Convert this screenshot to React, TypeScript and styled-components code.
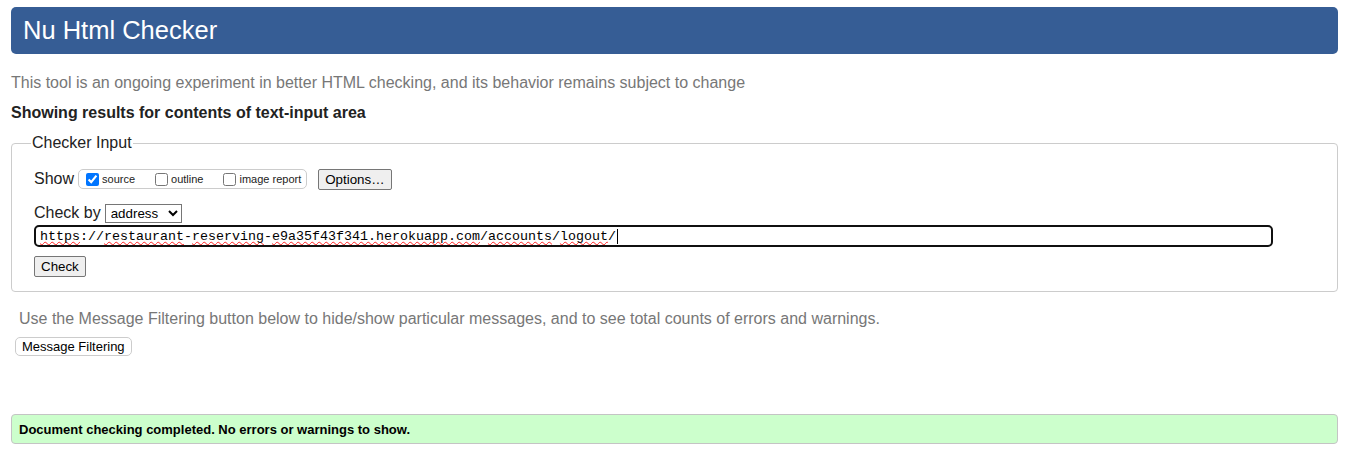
import React from "react";
import styled, { createGlobalStyle } from "styled-components";

const Global = createGlobalStyle`
  html, body { margin: 0; padding: 0; background: #fff; }
  body { font-family: "Liberation Sans", Arial, sans-serif; color: #222; }
`;

const Page = styled.div`
  padding: 7px 12px 0 11px;
  display: flex;
  flex-direction: column;
`;

const Header = styled.header`
  background: #365d95;
  border-radius: 5px;
  height: 47px;
  display: flex;
  align-items: center;
  padding: 0 12px;
`;

const Title = styled.h1`
  margin: 0;
  font-size: 25.5px;
  font-weight: normal;
  color: #fff;
`;

const Intro = styled.p`
  margin: 19px 0 0;
  font-size: 16px;
  line-height: 20px;
  color: #777;
`;

const Showing = styled.p`
  margin: 10px 0 0;
  font-size: 16px;
  line-height: 20px;
  font-weight: bold;
  color: #222;
`;

const Fieldset = styled.fieldset`
  margin: 11px 0 0;
  border: 1px solid #ccc;
  border-radius: 4px;
  padding: 16px 22px 14px 22px;
  display: flex;
  flex-direction: column;
`;

const Legend = styled.legend`
  font-size: 16px;
  padding: 0 1px;
  margin-left: -3px;
  color: #222;
`;

const Row = styled.div<{ $top?: number }>`
  display: flex;
  align-items: center;
  height: 22px;
  margin-top: ${(p) => p.$top ?? 0}px;
`;

const Label = styled.span`
  font-size: 16px;
  color: #222;
  margin-right: 4px;
`;

const OptionsBox = styled.span`
  display: inline-flex;
  align-items: center;
  height: 18px;
  border: 1px solid #ccc;
  border-radius: 5px;
  padding: 0 5px 0 6px;
`;

const Opt = styled.label<{ $gap?: number }>`
  display: inline-flex;
  align-items: center;
  font-size: 11px;
  color: #222;
  margin-right: ${(p) => p.$gap ?? 0}px;
  input { margin: 0 3px 0 1px; width: 13px; height: 13px; }
`;

const NativeButton = styled.button<{ $left?: number }>`
  font-family: "Liberation Sans", Arial, sans-serif;
  font-size: 13.33px;
  color: #000;
  background: #efefef;
  border: 1px solid #767676;
  border-radius: 2px;
  padding: 0 6px;
  height: 21px;
  margin-left: ${(p) => p.$left ?? 0}px;
`;

const Select = styled.select`
  font-family: "Liberation Sans", Arial, sans-serif;
  font-size: 13.33px;
  height: 19px;
  width: 77px;
  border: 1px solid #767676;
  border-radius: 0;
  background: #fff;
  color: #000;
  padding: 0 0 0 1px;
`;

const UrlField = styled.div`
  margin-top: 1px;
  height: 18px;
  border: 2px solid #101010;
  border-radius: 5px;
  padding: 0 4px;
  margin-right: 42px;
  display: flex;
  align-items: center;
  font-family: "Liberation Mono", "Courier New", monospace;
  font-size: 13.33px;
  color: #000;
  white-space: pre;
  overflow: hidden;
`;

const Miss = styled.span`
  text-decoration: underline wavy #f22;
  text-decoration-thickness: 1px;
  text-underline-offset: 1px;
  text-decoration-skip-ink: none;
`;

const Caret = styled.span`
  display: inline-block;
  width: 1px;
  height: 15px;
  background: #000;
  margin-left: 1px;
`;

const CheckRow = styled.div`
  margin-top: 9px;
  display: flex;
`;

const Note = styled.p`
  margin: 17px 0 0 8px;
  font-size: 16px;
  line-height: 20px;
  color: #777;
`;

const FilterRow = styled.div`
  margin: 8px 0 0 4px;
  display: flex;
`;

const FilterButton = styled.button`
  font-family: "Liberation Sans", Arial, sans-serif;
  font-size: 13px;
  color: #000;
  background: #fff;
  border: 1px solid #ccc;
  border-radius: 5px;
  height: 19px;
  padding: 0 6px;
`;

const Success = styled.div`
  margin-top: 58px;
  background: #ccffcc;
  border: 1px solid #c4c4c4;
  border-radius: 4px;
  height: 28px;
  display: flex;
  align-items: center;
  padding: 0 7px;
  font-size: 13px;
  font-weight: bold;
  color: #000;
`;

export default function App() {
  return (
    <>
      <Global />
      <Page>
        <Header>
          <Title>Nu Html Checker</Title>
        </Header>
        <Intro>
          This tool is an ongoing experiment in better HTML checking, and its behavior remains subject to change
        </Intro>
        <Showing>Showing results for contents of text-input area</Showing>
        <Fieldset>
          <Legend>Checker Input</Legend>
          <Row>
            <Label>Show</Label>
            <OptionsBox>
              <Opt $gap={19}>
                <input type="checkbox" defaultChecked />
                source
              </Opt>
              <Opt $gap={19}>
                <input type="checkbox" />
                outline
              </Opt>
              <Opt>
                <input type="checkbox" />
                image report
              </Opt>
            </OptionsBox>
            <NativeButton $left={11}>Options…</NativeButton>
          </Row>
          <Row $top={12}>
            <Label>Check by</Label>
            <Select defaultValue="address">
              <option value="address">address</option>
              <option value="file">file upload</option>
              <option value="text">text input</option>
            </Select>
          </Row>
          <UrlField role="textbox" aria-label="Address">
            <Miss>https</Miss>://<Miss>restaurant</Miss>-<Miss>reserving</Miss>-
            <Miss>e9a35f43f341.herokuapp.com</Miss>/<Miss>accounts</Miss>/<Miss>logout</Miss>/
            <Caret />
          </UrlField>
          <CheckRow>
            <NativeButton>Check</NativeButton>
          </CheckRow>
        </Fieldset>
        <Note>
          Use the Message Filtering button below to hide/show particular messages, and to see total counts of errors and warnings.
        </Note>
        <FilterRow>
          <FilterButton>Message Filtering</FilterButton>
        </FilterRow>
        <Success>Document checking completed. No errors or warnings to show.</Success>
      </Page>
    </>
  );
}
